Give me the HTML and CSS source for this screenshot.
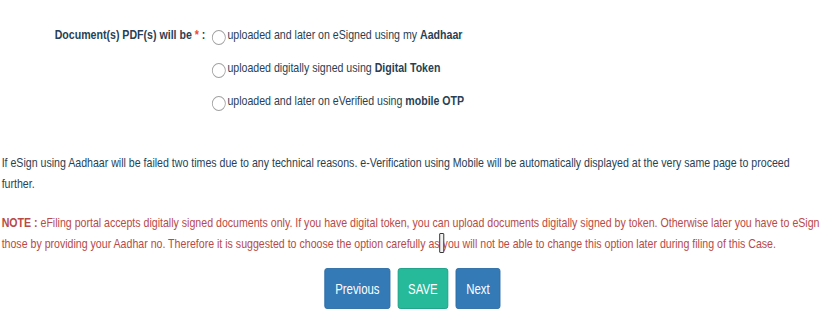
FILE: index.html
```html
<!DOCTYPE html>
<html>
<head>
<meta charset="utf-8">
<link rel="stylesheet" href="styles.css">
</head>
<body>
<div class="frame">
<div class="page">
  <div class="form-row">
    <div class="label">Document(s) PDF(s) will be <span class="req">*</span> :</div>
    <div class="options">
      <label class="opt"><span class="radio"></span><span>uploaded and later on eSigned using my <b>Aadhaar</b></span></label>
      <label class="opt"><span class="radio"></span><span>uploaded digitally signed using <b>Digital Token</b></span></label>
      <label class="opt"><span class="radio"></span><span>uploaded and later on eVerified using <b>mobile OTP</b></span></label>
    </div>
  </div>
  <p class="info">If eSign using Aadhaar will be failed two times due to any technical reasons. e-Verification using Mobile will be automatically displayed at the very same page to proceed further.</p>
  <p class="note"><b>NOTE :</b> eFiling portal accepts digitally signed documents only. If you have digital token, you can upload documents digitally signed by token. Otherwise later you have to eSign those by providing your Aadhar no. Therefore it is suggested to choose the option carefully as <span class="cursor-wrap"><span class="cursor"></span></span>you will not be able to change this option later during filing of this Case.</p>
  <div class="actions">
    <button class="btn btn-blue">Previous</button>
    <button class="btn btn-green">SAVE</button>
    <button class="btn btn-blue">Next</button>
  </div>
</div>
</div>
</body>
</html>
```
FILE: styles.css
```css
html, body {
  margin: 0;
  padding: 0;
  background: #ffffff;
  overflow: hidden;
}
body {
  font-family: "Liberation Sans", Arial, sans-serif;
  font-size: 13px;
  color: #2a3f54;
}
.frame {
  width: 824px;
  height: 323px;
  overflow: hidden;
}
.page {
  width: 1010px;
  box-sizing: border-box;
  padding: 24px 0 0 2px;
  transform: scaleX(0.815);
  transform-origin: 0 0;
}
.form-row {
  display: grid;
  grid-template-columns: 258px 1fr;
  align-items: start;
}
.label {
  text-align: right;
  font-weight: bold;
  padding-right: 8px;
  line-height: 22px;
}
.req {
  color: #e74c3c;
}
.options {
  display: flex;
  flex-direction: column;
  gap: 11px;
}
.opt {
  display: flex;
  align-items: center;
  line-height: 22px;
}
.radio {
  flex: none;
  width: 15px;
  height: 13px;
  border: 1px solid #a0a0a0;
  border-radius: 50%;
  margin-right: 2px;
  margin-top: 5px;
  background: #fff;
}
.info {
  margin: 40px 0 0;
  line-height: 21px;
}
.note {
  margin: 18px 0 0;
  line-height: 21px;
  color: #b94a48;
}
.cursor-wrap {
  position: relative;
  display: inline-block;
  width: 0;
}
.cursor {
  position: absolute;
  left: -4px;
  top: -15px;
  width: 4px;
  height: 18px;
  border: 1px solid #222;
  border-radius: 1px;
  background: #f2f2f2;
}
.actions {
  display: flex;
  justify-content: center;
  gap: 9px;
  margin-top: 14px;
}
.btn {
  font-family: inherit;
  font-size: 14px;
  color: #fff;
  border: 1px solid transparent;
  border-radius: 3px;
  height: 41px;
  padding: 0 12px;
  cursor: pointer;
}
.btn-blue {
  background: #337ab7;
  border-color: #2e6da4;
}
.btn-green {
  background: #26b99a;
  border-color: #169f85;
}
```
